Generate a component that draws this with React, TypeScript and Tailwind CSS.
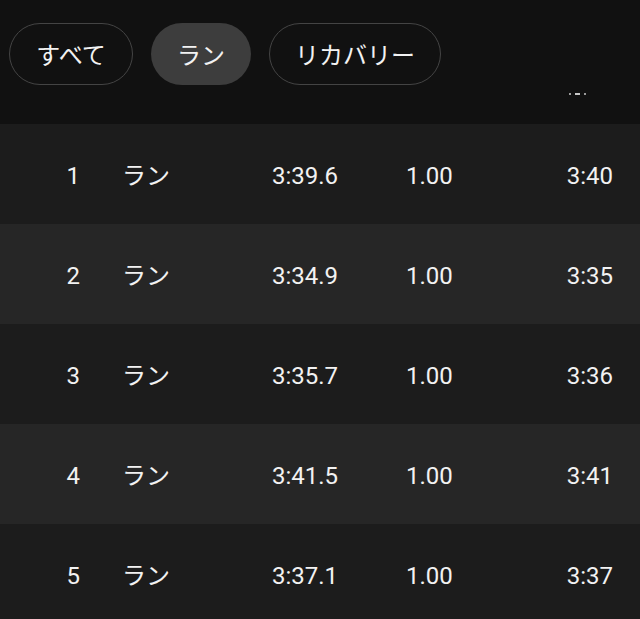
const rows = [
  { n: 1, time: "3:39.6", dist: "1.00", pace: "3:40" },
  { n: 2, time: "3:34.9", dist: "1.00", pace: "3:35" },
  { n: 3, time: "3:35.7", dist: "1.00", pace: "3:36" },
  { n: 4, time: "3:41.5", dist: "1.00", pace: "3:41" },
  { n: 5, time: "3:37.1", dist: "1.00", pace: "3:37" },
];

const font = { fontFamily: 'Roboto, "Noto Sans CJK JP", sans-serif' };

export default function App() {
  return (
    <div className="w-[640px] h-[619px] overflow-hidden bg-[#111111] text-[#f2f2f2]" style={font}>
      {/* Filter pills */}
      <div className="h-[124px] flex flex-col">
        <div className="flex items-center gap-[18px] pl-[9px] pt-[23px]">
          <button className="h-[62px] w-[124px] pt-[3px] rounded-full border-[1.5px] border-[#444444] text-[24px] flex items-center justify-center">
            すべて
          </button>
          <button className="h-[62px] w-[100px] pt-[3px] rounded-full bg-[#3d3d3d] text-[24px] flex items-center justify-center">
            ラン
          </button>
          <button className="h-[62px] w-[172px] pt-[3px] rounded-full border-[1.5px] border-[#444444] text-[24px] flex items-center justify-center">
            リカバリー
          </button>
        </div>
        {/* bottom edge of a clipped header label */}
        <div className="flex justify-end items-center gap-[4px] pr-[54px] mt-[8px]">
          <div className="w-[2px] h-[2px] bg-[#9a9a9a]" />
          <div className="w-[5px] h-[2px] bg-[#c8c8c8]" />
          <div className="w-[2px] h-[2px] bg-[#9a9a9a]" />
        </div>
      </div>

      {/* Laps */}
      <div className="flex flex-col">
        {rows.map((r, i) => (
          <div
            key={r.n}
            className={`h-[100px] pt-[4px] flex items-center text-[24px] ${i % 2 === 0 ? "bg-[#1c1c1c]" : "bg-[#262626]"}`}
          >
            <span className="w-[122px] pr-[42px] text-right">{r.n}</span>
            <span className="w-[150px]">ラン</span>
            <span className="w-[134px]">{r.time}</span>
            <span className="w-[100px]">{r.dist}</span>
            <span className="flex-1 text-right pr-[27px]">{r.pace}</span>
          </div>
        ))}
      </div>
    </div>
  );
}
